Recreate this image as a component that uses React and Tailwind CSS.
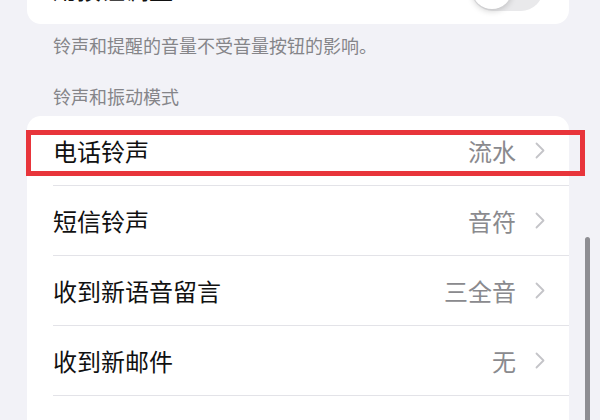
import React from 'react';

const rows = [
  { label: '电话铃声', value: '流水' },
  { label: '短信铃声', value: '音符' },
  { label: '收到新语音留言', value: '三全音' },
  { label: '收到新邮件', value: '无' },
];

function Chevron() {
  return (
    <svg width="10" height="17" viewBox="0 0 10 17" fill="none" className="ml-[19px] shrink-0">
      <path d="M1.5 1.5 L8.5 8.5 L1.5 15.5" stroke="#c4c4c8" strokeWidth="1.8" strokeLinecap="round" strokeLinejoin="round" />
    </svg>
  );
}

function Row({ label, value }) {
  return (
    <div className="flex h-[70px] pl-[26px]">
      <div className="flex flex-1 items-center justify-between border-b border-[#e3e3e8] pr-[24px]">
        <span className="text-[24px] leading-none text-[#111]">{label}</span>
        <div className="flex items-center">
          <span className="text-[24px] leading-none text-[#8a8a8e]">{value}</span>
          <Chevron />
        </div>
      </div>
    </div>
  );
}

export default function App() {
  return (
    <div
      className="relative w-[600px] h-[420px] overflow-hidden bg-[#f2f2f7]"
      style={{ fontFamily: '"Noto Sans CJK SC", "Noto Sans", sans-serif' }}
    >
      <div className="ml-[27px] w-[542px] -mt-[46px]">
        {/* top card, cut off by the viewport */}
        <div className="flex h-[70px] items-center justify-between rounded-[14px] bg-white pl-[26px] pr-[26px]">
          <span className="text-[24px] leading-none text-[#111]">用按钮调整</span>
          <div className="relative h-[44px] w-[72px] rounded-full bg-[#e9e9eb]">
            <div className="absolute left-[1px] top-[2px] h-[40px] w-[40px] rounded-full bg-white shadow-[0_2px_6px_rgba(0,0,0,0.18)]" />
          </div>
        </div>

        <p className="px-[26px] pt-[9px] text-[18px] leading-[24px] text-[#858589]">
          铃声和提醒的音量不受音量按钮的影响。
        </p>

        <p className="mt-[27px] px-[26px] text-[18px] leading-[24px] text-[#858589]">
          铃声和振动模式
        </p>

        <div className="mt-[8px] rounded-[14px] bg-white">
          {rows.map((r) => (
            <Row key={r.label} label={r.label} value={r.value} />
          ))}
          <div className="h-[70px]" />
        </div>
      </div>

      {/* scroll indicator */}
      <div className="absolute right-[10px] top-[237px] h-[200px] w-[5px] rounded-full bg-[#8e8e93]" />

      {/* red highlight box */}
      <div className="absolute left-[26px] top-[130px] h-[46px] w-[559px] border-[5px] border-[#e8353b]" />
    </div>
  );
}
